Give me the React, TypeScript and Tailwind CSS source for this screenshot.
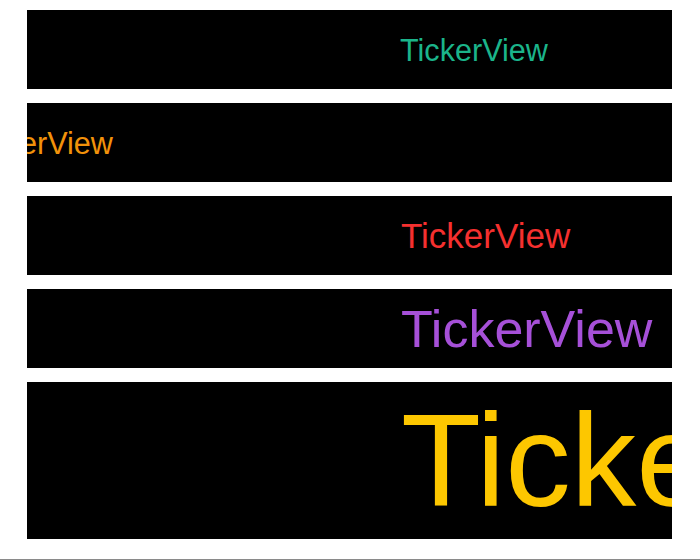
import React from 'react';

interface Ticker {
  id: number;
  color: string;
  size: string;
  height: string;
  offset: string;
}

const tickers: Ticker[] = [
  { id: 1, color: 'text-[#1bb48a]', size: 'text-[30.6px]', height: 'h-[79px]', offset: 'ml-[373px]' },
  { id: 2, color: 'text-[#f2920a]', size: 'text-[30.6px]', height: 'h-[79px]', offset: 'ml-[-62px]' },
  { id: 3, color: 'text-[#f5302f]', size: 'text-[35px]', height: 'h-[79px]', offset: 'ml-[374px]' },
  { id: 4, color: 'text-[#a650d8]', size: 'text-[52px]', height: 'h-[79px]', offset: 'ml-[374px]' },
  { id: 5, color: 'text-[#fdc700]', size: 'text-[131px]', height: 'h-[157px]', offset: 'ml-[374px]' },
];

const App: React.FC = () => {
  return (
    <div
      className="w-[700px] h-[560px] bg-white border-b border-[#8a8a8a] pt-[10px] pl-[27px]"
      style={{ fontFamily: '"Liberation Sans", Arial, sans-serif' }}
    >
      <div className="flex flex-col gap-[14px] w-[645px]">
        {tickers.map((t) => (
          <div key={t.id} className={`${t.height} bg-black flex items-center overflow-hidden`}>
            <span className={`${t.offset} ${t.color} ${t.size} whitespace-nowrap shrink-0 leading-[1.15] pt-[2px]`}>
              TickerView
            </span>
          </div>
        ))}
      </div>
    </div>
  );
};

export default App;
